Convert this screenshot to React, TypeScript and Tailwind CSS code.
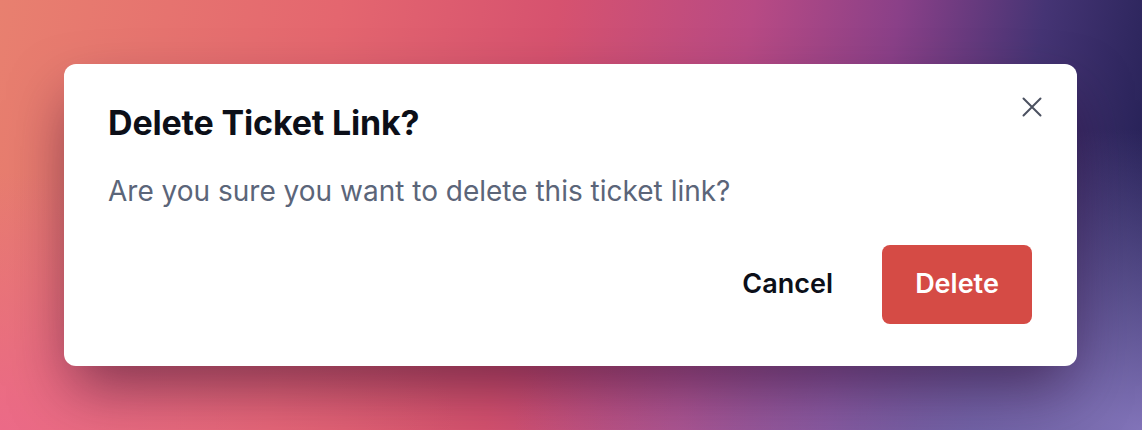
import React from "react";

export default function App() {
  return (
    <div
      className="w-full h-[430px] pt-16 pb-[64px] pl-16 pr-[65px] bg-[radial-gradient(ellipse_55%_70%_at_100%_100%,rgba(135,120,190,0.95),rgba(135,120,190,0)_100%),radial-gradient(ellipse_40%_60%_at_0%_100%,rgba(236,104,138,0.9),rgba(236,104,138,0)_100%),linear-gradient(100deg,#e8806f_0%,#e4666f_28%,#d6526f_46%,#b84a84_62%,#8a4088_74%,#453474_86%,#1e1d4f_100%)]"
      style={{ fontFamily: "Inter, 'Noto Sans', sans-serif" }}
    >
      <div className="relative h-full bg-white rounded-xl shadow-[0_28px_60px_-8px_rgba(40,5,40,0.55)] pl-11 pr-[45px] pt-[39px] flex flex-col">
        <button className="absolute right-[34px] top-[32px] p-[1px] text-[#4b5160]" aria-label="Close dialog">
          <svg width="20" height="20" viewBox="0 0 20 20" fill="none" stroke="currentColor" strokeWidth="2" strokeLinecap="round">
            <path d="M1.5 1.5 L18.5 18.5 M18.5 1.5 L1.5 18.5" />
          </svg>
        </button>
        <h2 className="text-[34px] leading-10 font-bold text-[#0c0f18] tracking-[-0.005em]">Delete Ticket Link?</h2>
        <p className="mt-[30px] text-[28px] leading-9 text-[#5b6579]">
          Are you sure you want to delete this ticket link?
        </p>
        <div className="mt-auto mb-[42px] flex justify-end gap-[15px]">
          <button className="h-[79px] px-[34px] rounded-lg text-[27px] font-semibold text-[#0c0f18]">Cancel</button>
          <button className="h-[79px] w-[150px] rounded-lg bg-[#d54b45] text-[27px] font-semibold text-white">Delete</button>
        </div>
      </div>
    </div>
  );
}
